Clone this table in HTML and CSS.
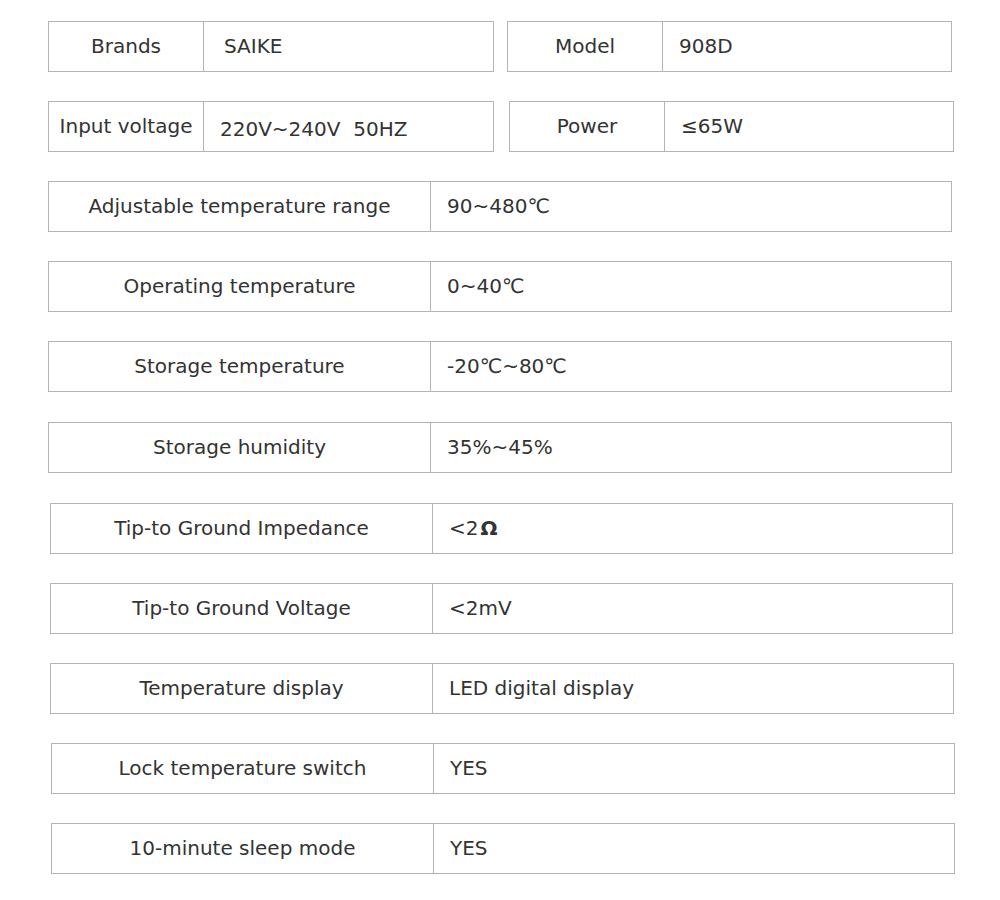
FILE: index.html
```html
<!DOCTYPE html>
<html lang="en">
<head>
<meta charset="utf-8">
<title>908D specifications</title>
<link rel="stylesheet" href="styles.css">
</head>
<body>
<div class="sheet">
  <div class="pair">
    <div class="box half"><div class="label">Brands</div><div class="value v-wide">SAIKE</div></div>
    <div class="box half"><div class="label">Model</div><div class="value">908D</div></div>
  </div>
  <div class="pair">
    <div class="box half"><div class="label">Input voltage</div><div class="value low">220V~240V&nbsp; 50HZ</div></div>
    <div class="box half shift"><div class="label">Power</div><div class="value">≤65W</div></div>
  </div>
  <div class="box full"><div class="label">Adjustable temperature range</div><div class="value">90~480℃</div></div>
  <div class="box full"><div class="label">Operating temperature</div><div class="value">0~40℃</div></div>
  <div class="box full"><div class="label">Storage temperature</div><div class="value">-20℃~80℃</div></div>
  <div class="box full step"><div class="label">Storage humidity</div><div class="value">35%~45%</div></div>
  <div class="box full d2 step"><div class="label">Tip-to Ground Impedance</div><div class="value">&lt;2<b class="ohm">Ω</b></div></div>
  <div class="box full d2"><div class="label">Tip-to Ground Voltage</div><div class="value">&lt;2mV</div></div>
  <div class="box full d2 wide1"><div class="label">Temperature display</div><div class="value">LED digital display</div></div>
  <div class="box full d3"><div class="label">Lock temperature switch</div><div class="value">YES</div></div>
  <div class="box full d3"><div class="label">10-minute sleep mode</div><div class="value">YES</div></div>
</div>
</body>
</html>
```

FILE: styles.css
```css
html, body {
  margin: 0;
  padding: 0;
  background: #ffffff;
}
body {
  font-family: "DejaVu Sans", "Liberation Sans", sans-serif;
  color: #333333;
  font-size: 20px;
}
.sheet {
  width: 904px;
  padding: 21px 0 0 48px;
  display: flex;
  flex-direction: column;
  gap: 29px;
}
.pair {
  display: grid;
  grid-template-columns: 446px 445px;
  column-gap: 13px;
}
.box {
  display: flex;
  height: 51px;
  box-sizing: border-box;
  border: 1px solid #b4b4b4;
}
.label {
  flex: none;
  display: flex;
  align-items: center;
  justify-content: center;
  border-right: 1px solid #b4b4b4;
  padding-bottom: 1px;
}
.half .label { width: 154px; }
.full .label { width: 381px; }
.value {
  display: flex;
  align-items: center;
  padding-left: 16px;
  padding-bottom: 1px;
}
.v-wide { padding-left: 20px; }
.low { padding-top: 4px; padding-bottom: 0; }
.step { margin-top: 1px; }
.shift { margin-left: 2px; margin-right: -2px; }
.d2 { margin-left: 2px; margin-right: -1px; }
.wide1 { margin-right: -2px; }
.d3 { margin-left: 3px; margin-right: -3px; }
.ohm { font-weight: bold; margin-left: 2px; }
```
